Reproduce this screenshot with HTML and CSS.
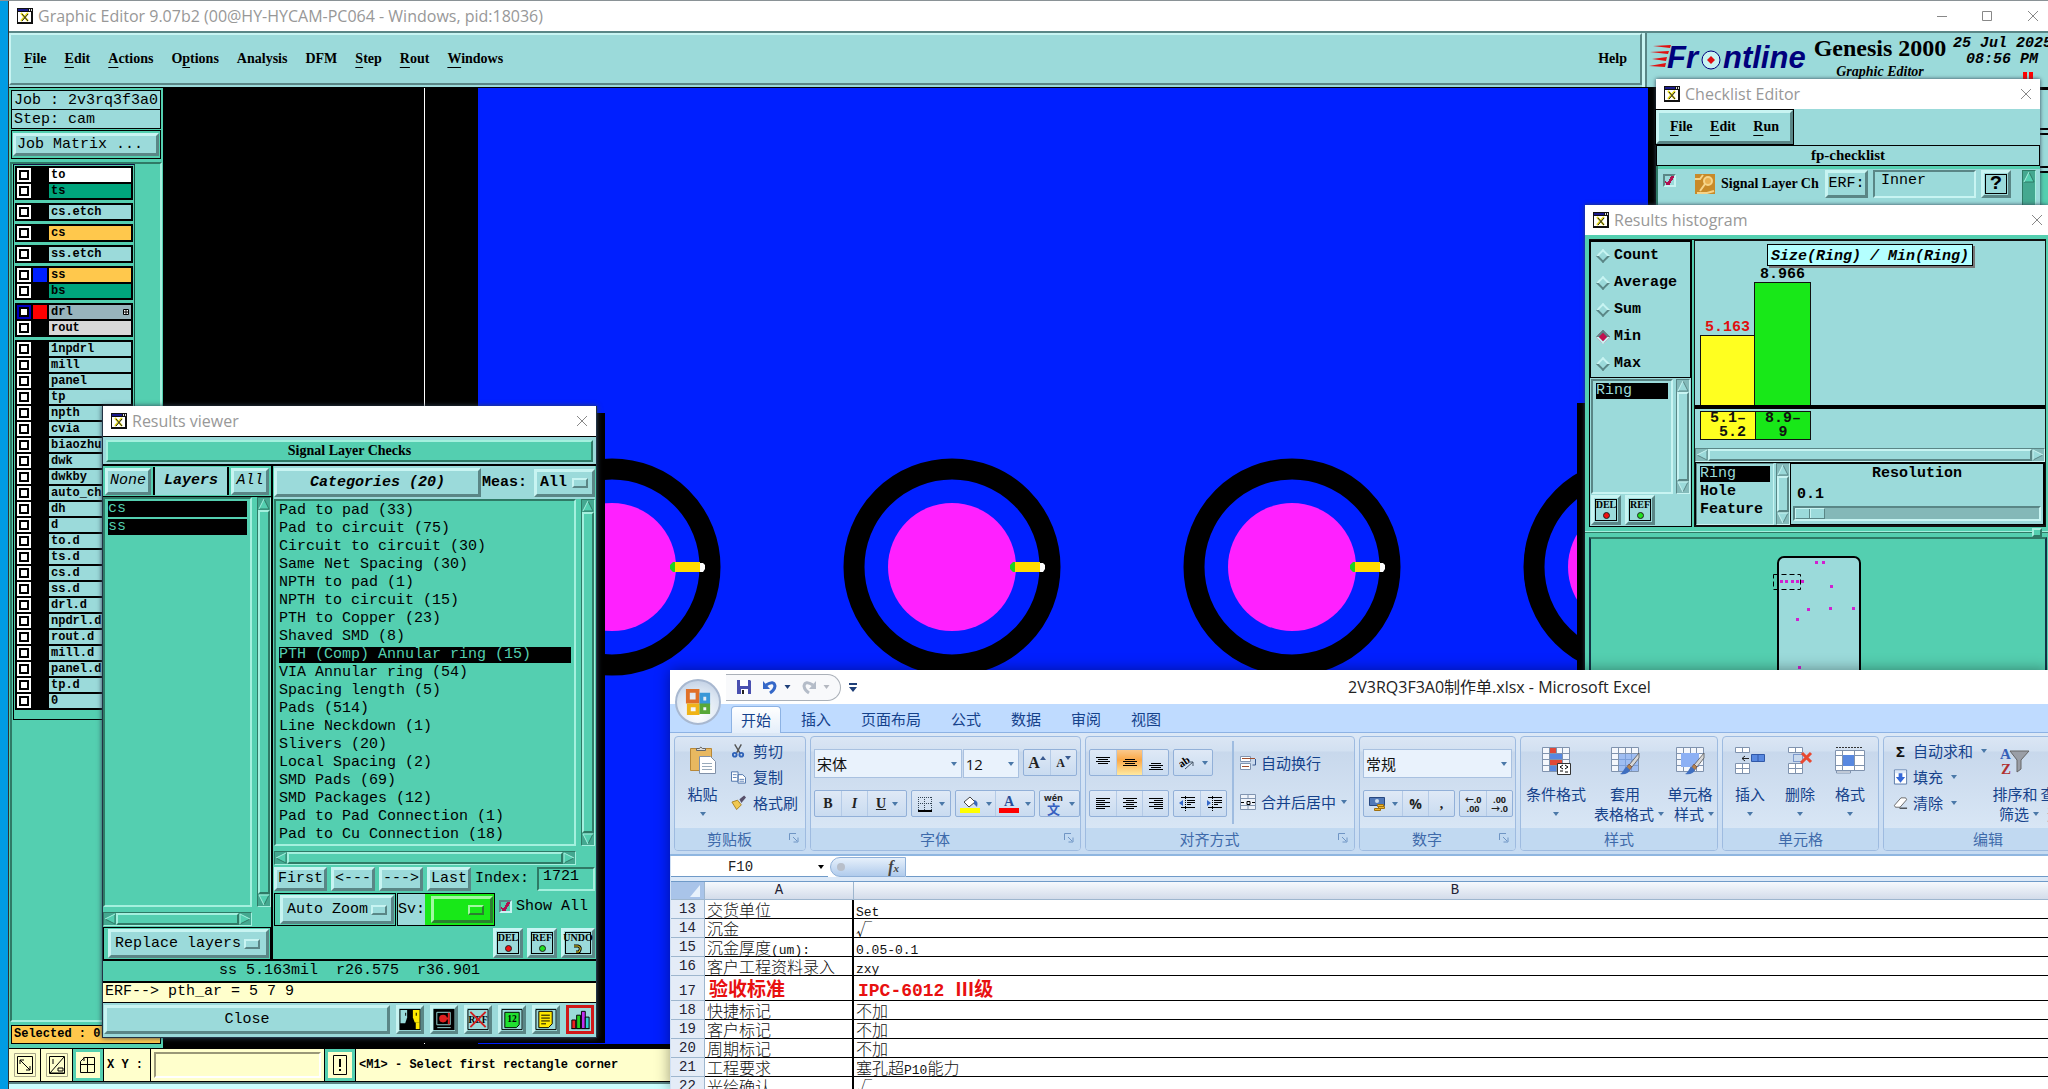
FILE: index.html
```html
<!DOCTYPE html>
<html lang="zh-CN">
<head>
<meta charset="utf-8">
<title>Graphic Editor</title>
<link rel="stylesheet" href="styles.css">
</head>
<body>
<svg class="defs" aria-hidden="true">
  <symbol id="i-app" viewBox="0 0 16 16"><path fill="#111" d="M0 0h16v16H0z"/><path fill="#fff" d="M1 4h13v10H1z"/><path fill="#1a1a8c" d="M1 1h10v2H1z"/><path fill="#ddd" d="M12 1h1v2h-1zM14 1h1v2h-1z"/><path stroke="#e6dc20" stroke-width="2" d="M4 5l7 8M11 5l-7 8"/><path stroke="#222" d="M5 6l6 7M11 6l-6 7"/></symbol>
  <symbol id="i-close" viewBox="0 0 12 12"><path stroke="#888" fill="none" d="M1 1l10 10M11 1L1 11"/></symbol>
  <symbol id="i-up" viewBox="0 0 12 12"><path class="face" d="M6 1l5 10H1z"/><path class="lo" d="M6 1l5 10H1"/><path class="hi" d="M1 11L6 1"/></symbol>
  <symbol id="i-down" viewBox="0 0 12 12"><path class="face" d="M6 11L1 1h10z"/><path class="lo" d="M6 11l5-10"/><path class="hi" d="M11 1H1l5 10"/></symbol>
  <symbol id="i-left" viewBox="0 0 12 12"><path class="face" d="M1 6l10-5v10z"/><path class="lo" d="M11 1v10L1 6"/><path class="hi" d="M1 6l10-5"/></symbol>
  <symbol id="i-right" viewBox="0 0 12 12"><path class="face" d="M11 6L1 1v10z"/><path class="lo" d="M1 11l10-5"/><path class="hi" d="M1 11V1l10 5"/></symbol>
  <symbol id="i-tri" viewBox="0 0 6 4"><path fill="#4a78a8" d="M0 0h6L3 4z"/></symbol>
  <symbol id="i-launch" viewBox="0 0 10 10"><path fill="none" stroke="#6f95c4" d="M.5 7V.5H7M4 4l4 4M9 4.500v4.500H4.500"/></symbol>
  <symbol id="i-grid" viewBox="0 0 30 30"><path fill="#f4f7fc" stroke="#8093ae" d="M1.500 2.500h27v24h-27z"/><path fill="none" stroke="#8093ae" d="M1 8.500h27M1 14.500h27M1 20.500h27M8.500 2v24M15.500 2v24M21.500 2v24"/></symbol>
  <symbol id="i-brush" viewBox="0 0 30 30"><path fill="#d8d8d8" stroke="#555" stroke-width=".8" d="M29 8L19 20l3 2 7-9z"/><path fill="#b5814a" stroke="#644" stroke-width=".6" d="M19 19l3 3-3 4-3-3z"/><path fill="#3f6fc0" d="M17 22c-3 0-3 5-7 7 5 1 9-1 10-4z"/></symbol>
</svg>

<main class="win main-win">
  <header class="title">
    <svg class="app"><use href="#i-app"/></svg><h1>Graphic Editor 9.07b2 (00@HY-HYCAM-PC064 - Windows, pid:18036)</h1>
    <svg class="winctl" viewBox="0 0 102 14"><path fill="none" stroke="#888" d="M0 7.500h10M45.500 2.500h9v9h-9zM91 2l10 10M101 2L91 12"/></svg>
  </header>
  <div class="top">
    <nav class="menubar">
      <button><u>F</u>ile</button><button><u>E</u>dit</button><button><u>A</u>ctions</button><button>O<u>p</u>tions</button><button>Analysis</button><button>DFM</button><button><u>S</u>tep</button><button><u>R</u>out</button><button><u>W</u>indows</button><button class="help">Help</button>
    </nav>
    <div class="brand">
      <svg class="logo" viewBox="0 0 162 30" role="img" aria-label="Frontline">
        <path fill="#e01010" d="M4 3l18-1-1 3zM1 9l19-1-1 3zM3 16l15-2-1 4zM0 23l17-3-1 4z"/>
        <text x="18" y="25">Fr</text><text x="74" y="25">ntline</text>
        <circle cx="62" cy="17" r="9" fill="#c8f4f2" stroke="#00007c" stroke-width="1"/><path fill="#e01010" d="M62 13l4 4-4 4-4-4z"/>
      </svg>
      <div class="product"><strong>Genesis 2000</strong><em>Graphic Editor</em></div>
      <div class="clock"><span>25 Jul 2025</span><span>08:56 PM</span><i></i></div>
    </div>
  </div>
  <div class="work">
    <aside class="side">
      <p class="info">Job : 2v3rq3f3a0</p>
      <p class="info">Step: cam</p>
      <div class="matrix"><button class="up">Job Matrix ...</button></div>
      <div class="layers">
        <div class="stack">
          <ul>
            <li><label><input type="checkbox"><i></i><span class="white">to</span></label></li>
            <li><label><input type="checkbox"><i></i><span class="green">ts</span></label></li>
          </ul>
          <ul><li><label><input type="checkbox"><i></i><span>cs.etch</span></label></li></ul>
          <ul><li><label><input type="checkbox"><i></i><span class="gold">cs</span></label></li></ul>
          <ul><li><label><input type="checkbox"><i></i><span>ss.etch</span></label></li></ul>
          <ul>
            <li><label><input type="checkbox"><i class="blue"></i><span class="gold">ss</span></label></li>
            <li><label><input type="checkbox"><i></i><span class="green">bs</span></label></li>
          </ul>
          <ul>
            <li><label><input type="checkbox" checked><i class="red"></i><span class="slate">drl<svg viewBox="0 0 6 6"><path fill="#fff" stroke="#000" d="M.5.5h5v5h-5zM3 0v6M0 3h6"/></svg></span></label></li>
            <li><label><input type="checkbox"><i></i><span class="grey">rout</span></label></li>
          </ul>
          <ul>
            <li><label><input type="checkbox"><i></i><span>1npdrl</span></label></li>
            <li><label><input type="checkbox"><i></i><span>mill</span></label></li>
            <li><label><input type="checkbox"><i></i><span>panel</span></label></li>
            <li><label><input type="checkbox"><i></i><span>tp</span></label></li>
            <li><label><input type="checkbox"><i></i><span>npth</span></label></li>
            <li><label><input type="checkbox"><i></i><span>cvia</span></label></li>
            <li><label><input type="checkbox"><i></i><span>biaozhu</span></label></li>
            <li><label><input type="checkbox"><i></i><span>dwk</span></label></li>
            <li><label><input type="checkbox"><i></i><span>dwkby</span></label></li>
            <li><label><input type="checkbox"><i></i><span>auto_chk</span></label></li>
            <li><label><input type="checkbox"><i></i><span>dh</span></label></li>
            <li><label><input type="checkbox"><i></i><span>d</span></label></li>
            <li><label><input type="checkbox"><i></i><span>to.d</span></label></li>
            <li><label><input type="checkbox"><i></i><span>ts.d</span></label></li>
            <li><label><input type="checkbox"><i></i><span>cs.d</span></label></li>
            <li><label><input type="checkbox"><i></i><span>ss.d</span></label></li>
            <li><label><input type="checkbox"><i></i><span>drl.d</span></label></li>
            <li><label><input type="checkbox"><i></i><span>npdrl.d</span></label></li>
            <li><label><input type="checkbox"><i></i><span>rout.d</span></label></li>
            <li><label><input type="checkbox"><i></i><span>mill.d</span></label></li>
            <li><label><input type="checkbox"><i></i><span>panel.d</span></label></li>
            <li><label><input type="checkbox"><i></i><span>tp.d</span></label></li>
            <li><label><input type="checkbox"><i></i><span>0</span></label></li>
          </ul>
        </div>
      </div>
      <p class="selected">Selected : 0</p>
    </aside>
    <div class="canvas">
      <svg>
        <path fill="#fff" d="M261 0h1v1200h-1z"/>
        <rect x="315" width="100%" height="100%" fill="#001fff"/>
        <defs><g id="pad"><circle r="98" fill="none" stroke="#000" stroke-width="21"/><circle r="64" fill="#ff20ff"/><path fill="#20d020" d="M64-5h-3l-3 3v4l3 3h3z"/><path fill="#ffdc00" d="M63-5h25V5H63z"/><path fill="#fff" d="M88-4h3l2 2v4l-2 3h-3z"/></g></defs>
        <use href="#pad" x="449" y="479"/><use href="#pad" x="789" y="479"/><use href="#pad" x="1129" y="479"/><use href="#pad" x="1469" y="479"/>
        <path d="M0 325h442v630H0zM1414 315h71v350h-71z"/>
      </svg>
    </div>
    <aside class="tools"><div></div><div></div><div></div><div></div></aside>
  </div>
  <footer class="cmd">
    <button aria-label="Zoom area"><svg viewBox="0 0 24 26"><path fill="none" stroke="#aaa88a" d="M1.500 1.500h21v23h-21z"/><path fill="none" stroke="#000" d="M4.500 4.500h15v17h-15zM7 8l10 10M7 12V8h4M17 14v4h-4"/></svg></button>
    <button aria-label="Measure"><svg viewBox="0 0 24 26"><path fill="none" stroke="#aaa88a" d="M1.500 1.500h21v23h-21z"/><path fill="none" stroke="#000" d="M4.500 4.500h15v17h-15zM5 21L19 5M8 7v5M5 21h14M13 16h5v3h-5z"/></svg></button>
    <button class="on" aria-label="Grid"><svg viewBox="0 0 24 26"><path fill="none" stroke="#000" d="M4.500 9.500l4-4h10v15h-14zM11.500 5v15M4 12.500h14M8 5v4"/></svg></button>
    <label for="xy">X Y :</label><span class="field"><input id="xy"></span>
    <button class="on" aria-label="Alert"><svg viewBox="0 0 24 26"><path fill="none" stroke="#000" d="M5.500 3.500h13v19h-13z"/><path d="M11 7h2v8h-2zM11 17h2v2h-2z"/></svg></button>
    <output>&lt;M1&gt; - Select first rectangle corner</output>
  </footer>
</main>

<section class="win check-win">
  <header class="title"><svg class="app"><use href="#i-app"/></svg><h2>Checklist Editor</h2><button class="x" aria-label="Close"><svg><use href="#i-close"/></svg></button></header>
  <nav class="up menu2"><button><u>F</u>ile</button><button><u>E</u>dit</button><button><u>R</u>un</button></nav>
  <p class="listname">fp-checklist</p>
  <div class="checkrow">
    <input class="tick" type="checkbox" checked aria-label="Signal Layer Ch">
    <svg class="chip" viewBox="0 0 20 20"><path fill="#c88a28" d="M0 0h20v20H0z"/><circle cx="13" cy="7" r="4" fill="#e8b050" stroke="#f6d488" stroke-width="2"/><path fill="none" stroke="#f6d488" stroke-width="2" d="M10 10l-5 7M0 5h5l3-4M2 19h10l7-2"/></svg>
    <b>Signal Layer Ch</b><button class="up erf">ERF:</button><input class="down" value="Inner" aria-label="ERF"><button class="up q">?</button>
    <div class="sbv teal"><svg><use href="#i-up"/></svg></div>
  </div>
</section>

<section class="win hist-win">
  <header class="title"><svg class="app"><use href="#i-app"/></svg><h2>Results histogram</h2><button class="x" aria-label="Close"><svg><use href="#i-close"/></svg></button></header>
  <div class="hist">
    <div class="hleft">
      <fieldset>
        <label><input type="radio" name="stat">Count</label><label><input type="radio" name="stat">Average</label><label><input type="radio" name="stat">Sum</label><label><input type="radio" name="stat" checked>Min</label><label><input type="radio" name="stat">Max</label>
      </fieldset>
      <div class="hlist"><ul class="down"><li class="sel">Ring</li></ul><div class="sbv"><svg><use href="#i-up"/></svg><i></i><svg><use href="#i-down"/></svg></div></div>
      <div class="tags"><button class="up tag">DEL<i class="r"></i></button><button class="up tag">REF<i class="g"></i></button></div>
    </div>
    <div class="hright">
      <div class="plot">
        <h3>Size(Ring) / Min(Ring)</h3>
        <div class="bars"><div class="bar low"><span>5.163</span><i style="height:70px"></i></div><div class="bar high"><span>8.966</span><i style="height:123px"></i></div></div>
        <div class="bins"><span class="low">5.1–<br>&nbsp;5.2</span><span class="high">8.9–<br>9</span></div>
      </div>
      <div class="sbh"><svg><use href="#i-left"/></svg><i></i><svg><use href="#i-right"/></svg></div>
      <div class="res">
        <ul class="down"><li class="sel">Ring</li><li>Hole</li><li>Feature</li></ul>
        <div class="sbv"><svg><use href="#i-up"/></svg><i></i><svg><use href="#i-down"/></svg></div>
        <div class="resbox"><label for="rs">Resolution</label><span>0.1</span><input id="rs" type="range" value="0"></div>
      </div>
    </div>
  </div>
  <div class="sash"><i></i></div>
  <div class="map">
    <svg viewBox="0 0 96 130"><rect x="9" y="5" width="82" height="140" rx="6" fill="#9bdada" stroke="#000" stroke-width="2"/>
      <path fill="#d020d0" d="M46 9h3v3h-3zM53 9h3v3h-3zM11 28h3v3h-3zM16 28h3v3h-3zM22 28h3v3h-3zM27 28h3v3h-3zM32 28h3v3h-3zM61 33h3v3h-3zM38 56h3v3h-3zM60 55h3v3h-3zM83 55h3v3h-3zM27 66h3v3h-3zM29 114h3v3h-3z"/>
      <path fill="none" stroke="#000" stroke-dasharray="5 3" d="M4.500 22.500h27v15h-27z"/></svg>
  </div>
</section>

<section class="win view-win">
  <header class="title"><svg class="app"><use href="#i-app"/></svg><h2>Results viewer</h2><button class="x" aria-label="Close"><svg><use href="#i-close"/></svg></button></header>
  <p class="check"><span>Signal Layer Checks</span></p>
  <div class="cols">
    <div class="vleft">
      <div class="heads"><button class="up">None</button><b>Layers</b><button class="up">All</button></div>
      <div class="listrow"><ul class="down gr"><li class="sel">cs</li><li class="sel">ss</li></ul><div class="sbv teal"><svg><use href="#i-up"/></svg><i></i><svg><use href="#i-down"/></svg></div></div>
      <div class="sbh teal"><svg><use href="#i-left"/></svg><i></i><svg><use href="#i-right"/></svg></div>
      <div class="opt"><span class="up knob"><select aria-label="Layer mode"><option>Replace layers</option></select></span></div>
    </div>
    <div class="vright">
      <div class="cats"><button class="up">Categories (20)</button><label for="meas">Meas:</label><span class="up knob"><select id="meas"><option>All</option></select></span></div>
      <div class="listrow"><ul class="down gr">
        <li>Pad to pad (33)</li><li>Pad to circuit (75)</li><li>Circuit to circuit (30)</li><li>Same Net Spacing (30)</li><li>NPTH to pad (1)</li><li>NPTH to circuit (15)</li><li>PTH to Copper (23)</li><li>Shaved SMD (8)</li><li class="sel">PTH (Comp) Annular ring (15)</li><li>VIA Annular ring (54)</li><li>Spacing length (5)</li><li>Pads (514)</li><li>Line Neckdown (1)</li><li>Slivers (20)</li><li>Local Spacing (2)</li><li>SMD Pads (69)</li><li>SMD Packages (12)</li><li>Pad to Pad Connection (1)</li><li>Pad to Cu Connection (18)</li>
      </ul><div class="sbv teal"><svg><use href="#i-up"/></svg><i></i><svg><use href="#i-down"/></svg></div></div>
      <div class="sbh teal"><svg><use href="#i-left"/></svg><i></i><svg><use href="#i-right"/></svg></div>
      <div class="step"><button class="up">First</button><button class="up">&lt;---</button><button class="up">---&gt;</button><button class="up">Last</button><label for="idx">Index:</label><input id="idx" class="down gr" value="1721"></div>
      <div class="zoomrow"><span class="boxed auto"><span class="up knob"><select aria-label="Zoom mode"><option>Auto Zoom</option></select></span></span><span class="boxed sv"><label for="sv">Sv:</label><span class="lime"><span class="up knob"><select id="sv"><option></option></select></span></span></span><label class="show"><input class="tick" type="checkbox" checked>Show All</label></div>
      <div class="tags"><button class="up tag">DEL<i class="r"></i></button><button class="up tag">REF<i class="g"></i></button><button class="up tag">UNDO<svg viewBox="0 0 10 11"><path fill="none" stroke="#000" stroke-width="3" d="M1 3h4q4 1 1 6h-3"/><path fill="none" stroke="#f0e030" d="M1 3h4q4 1 1 6h-3"/></svg></button></div>
    </div>
  </div>
  <p class="meas">ss 5.163mil&nbsp; r26.575&nbsp; r36.901</p>
  <p class="erfline">ERF--&gt; pth_ar = 5 7 9</p>
  <div class="acts">
    <button class="up close">Close</button>
    <button class="up" aria-label="Zoom"><svg viewBox="0 0 22 24"><path d="M0 1h22v22H0z"/><path fill="#9bdada" d="M1 2h7v8l-2 6H1z"/><path fill="#ffe800" d="M14 2h7v13h-5l-2-5z"/><path fill="#ffe800" d="M17 15h4v7h-4z"/><path d="M6 5v3h1V5zM17 5v3h1V5z"/></svg></button>
    <button class="up" aria-label="Snapshot"><svg viewBox="0 0 22 24"><path d="M0 1h22v22H0z"/><path fill="#000" stroke="#9bdada" d="M3.500 4.500h14v13h-14z"/><circle cx="10" cy="11" r="4" fill="#e02020"/><path fill="#e02020" d="M15 5h2v12h-2zM10 10h6v2h-6z"/><path stroke="#9bdada" d="M4 20.500h14"/></svg></button>
    <button class="up" aria-label="No reference"><svg viewBox="0 0 22 24"><path fill="none" stroke="#000" d="M.5 1.500h21v21H.5z"/><text x="1" y="16">REF</text><path stroke="#d02020" stroke-width="2" d="M3 4l16 16M19 4L3 20"/></svg></button>
    <button class="up" aria-label="Renumber"><svg viewBox="0 0 22 24"><path fill="none" stroke="#000" d="M.5 1.500h21v21H.5z"/><path fill="#20e030" stroke="#000" d="M3.500 4.500h15v13l-3 3h-12z"/><text x="6" y="15">12</text></svg></button>
    <button class="up" aria-label="Report"><svg viewBox="0 0 22 24"><path fill="none" stroke="#000" d="M.5 1.500h21v21H.5z"/><path fill="#ffe800" stroke="#000" d="M3.500 3.500h14v13l-4 4h-10z"/><path stroke="#000" d="M6 7.500h9M6 10.500h9M6 13.500h9M6 16.500h5"/></svg></button>
    <button class="up hot" aria-label="Histogram"><svg viewBox="0 0 22 24"><path fill="none" stroke="#000" d="M2 21.500h19"/><path fill="#f02020" stroke="#000" d="M2.500 12.500h4v9h-4z"/><path fill="#20d020" stroke="#000" d="M7.500 7.500h4v14h-4z"/><path fill="#c030f0" stroke="#000" d="M12.500 3.500h4v18h-4z"/><path fill="#30d0d0" stroke="#000" d="M16.500 9.500h4v12h-4z"/></svg></button>
  </div>
</section>

<section class="win xl">
  <header class="xtitle">
    <div class="qat">
      <svg viewBox="0 0 16 16"><path fill="#4a50b0" d="M1 1h13l1 1v13H1z"/><path fill="#fff" d="M4 1h8v6H4zM5 10h7v5H5z"/><path fill="#222" d="M6 11h2v4H6z"/></svg>
      <svg viewBox="0 0 16 16"><path fill="none" stroke="#3568c8" stroke-width="3" d="M4 6q8-5 9 1-.5 4-5 7"/><path fill="#3568c8" d="M1 2v8h7z"/></svg>
      <svg class="a" viewBox="0 0 6 4"><path fill="#1e3f78" d="M0 0h6L3 4z"/></svg>
      <svg viewBox="0 0 16 16"><path fill="none" stroke="#b4bcc8" stroke-width="3" d="M12 6Q4 1 3 7q.5 4 5 7"/><path fill="#b4bcc8" d="M15 2v8H8z"/></svg>
      <svg class="a" viewBox="0 0 6 4"><path fill="#b4b8c0" d="M0 0h6L3 4z"/></svg>
    </div>
    <svg class="more" viewBox="0 0 8 9"><path fill="#1e3f78" d="M0 0h8v2H0zM0 4h8L4 9z"/></svg>
    <h2>2V3RQ3F3A0制作单.xlsx - Microsoft Excel</h2>
  </header>
  <button class="orb" aria-label="Office"><svg viewBox="0 0 30 30"><g fill="none" stroke-width="4"><path stroke="#e07028" d="M4 3h10v11H4z"/><path stroke="#3a98d8" d="M18 7h7v8h-7z"/><path stroke="#f0b418" d="M5 18h9v8H5z"/><path stroke="#58a838" d="M18 18h7v7h-7z"/></g></svg></button>
  <nav class="tabs"><button class="on">开始</button><button>插入</button><button>页面布局</button><button>公式</button><button>数据</button><button>审阅</button><button>视图</button></nav>
  <div class="ribbon">
    <div class="grp clip"><div class="body">
      <button class="big"><svg viewBox="0 0 30 30"><path fill="#e8b860" stroke="#b88838" d="M2.500 3.500h21v22h-21z"/><path fill="#ddd" stroke="#666" d="M8.500 5.500v-2h3q1-3 3 0h3v2z"/><path fill="#fff" stroke="#8090a8" d="M11.500 11.500h11l5 5v12h-16z"/><path stroke="#9ab" d="M14 18.500h10M14 21.500h10M14 24.500h10"/></svg>粘贴<svg class="a"><use href="#i-tri"/></svg></button>
      <div class="col"><button><svg viewBox="0 0 16 16"><path stroke="#555" stroke-width="1.500" d="M4 1l6 10M11 1L6 10"/><g fill="none" stroke="#2f62b8" stroke-width="2"><circle cx="4" cy="12" r="2"/><circle cx="11" cy="12" r="2"/></g></svg>剪切</button>
      <button><svg viewBox="0 0 16 16"><path fill="#fff" stroke="#4a70a8" d="M.5 2.500h7v10h-7zM7.500 5.500h5l3 3v6h-8z"/><path stroke="#5a80b8" d="M2 5.500h4M2 8.500h4M9 10.500h5M9 12.500h5"/></svg>复制</button>
      <button><svg viewBox="0 0 16 16"><path fill="#f0c850" stroke="#a88020" d="M1 7l6-2 4 5-5 5z"/><path fill="#58506a" d="M9 4l5-4 2 2-5 6z"/></svg>格式刷</button></div>
    </div><footer class="la">剪贴板<svg class="l"><use href="#i-launch"/></svg></footer></div>

    <div class="grp font"><div class="body rows">
      <div class="r"><span class="cb w150"><select aria-label="字体"><option>宋体</option></select><svg class="a"><use href="#i-tri"/></svg></span><span class="cb w56"><select aria-label="字号"><option>12</option></select><svg class="a"><use href="#i-tri"/></svg></span><span class="bs first"><button class="s18">A<svg class="m" viewBox="0 0 6 4"><path fill="#3a5a90" d="M0 4h6L3 0z"/></svg></button><button class="s14">A<svg class="m" viewBox="0 0 6 4"><path fill="#3a5a90" d="M0 0h6L3 4z"/></svg></button></span></div>
      <div class="r"><span class="bs"><button>B</button><button class="it">I</button><button class="wd"><u>U</u><svg class="a"><use href="#i-tri"/></svg></button></span>
      <span class="bs"><button class="wd"><svg viewBox="0 0 16 16"><path fill="none" stroke="#345" stroke-dasharray="1 1" d="M1.500 1v13M7.500 1v13M14.500 1v13M1 1.500h14M1 7.500h14"/><path stroke="#000" stroke-width="2" d="M1 15h14"/></svg><svg class="a"><use href="#i-tri"/></svg></button></span>
      <span class="bs"><button class="wd"><svg class="t" viewBox="0 0 20 18"><path fill="#fff" stroke="#444" d="M4 7l6-5 5 5-6 5z"/><path fill="#3a68b8" d="M14 5q5 1 3 7l-3-3z"/><path fill="#ff0" d="M0 13h20v5H0z"/></svg><svg class="a"><use href="#i-tri"/></svg></button><button class="wd"><svg class="t" viewBox="0 0 20 18"><text x="5" y="11" fill="#2a4f98">A</text><path fill="red" d="M0 13h20v5H0z"/></svg><svg class="a"><use href="#i-tri"/></svg></button></span>
      <span class="bs"><button class="wd"><span class="wen"><small>wén</small>文</span><svg class="a"><use href="#i-tri"/></svg></button></span></div>
    </div><footer class="la">字体<svg class="l"><use href="#i-launch"/></svg></footer></div>

    <div class="grp align"><div class="body split">
      <div class="rows">
      <div class="r"><span class="bs"><button><svg viewBox="0 0 16 16"><path stroke="#000" d="M1 2.500h14M3 4.500h10M1 6.500h14M3 8.500h10"/></svg></button><button class="hl"><svg viewBox="0 0 16 16"><path stroke="#000" d="M3 4.500h10M1 6.500h14M3 8.500h10M1 10.500h14"/></svg></button><button><svg viewBox="0 0 16 16"><path stroke="#000" d="M3 8.500h10M1 10.500h14M3 12.500h10M1 14.500h14"/></svg></button></span>
      <span class="bs"><button class="wd"><svg viewBox="0 0 16 16"><text class="ab" x="0" y="10" transform="rotate(-35 6 8)">ab</text><path stroke="#456" fill="none" d="M6 14l8-7M14 11V7h-4"/></svg><svg class="a"><use href="#i-tri"/></svg></button></span></div>
      <div class="r"><span class="bs"><button><svg viewBox="0 0 16 16"><path stroke="#000" d="M1 2.500h14M1 4.500h9M1 6.500h14M1 8.500h9M1 10.500h14M1 12.500h9"/></svg></button><button><svg viewBox="0 0 16 16"><path stroke="#000" d="M1 2.500h14M4 4.500h8M1 6.500h14M4 8.500h8M1 10.500h14M4 12.500h8"/></svg></button><button><svg viewBox="0 0 16 16"><path stroke="#000" d="M1 2.500h14M6 4.500h9M1 6.500h14M6 8.500h9M1 10.500h14M6 12.500h9"/></svg></button></span>
      <span class="bs"><button><svg viewBox="0 0 16 16"><path stroke="#000" d="M2 1.500h14M8 4.500h8M8 6.500h8M8 8.500h4M2 11.500h14"/><path stroke="#000" stroke-dasharray="1 1" d="M6.500 0v15"/><path fill="#3568c8" d="M0 7l4-3v6z"/></svg></button><button><svg viewBox="0 0 16 16"><path stroke="#000" d="M2 1.500h14M8 4.500h8M8 6.500h8M8 8.500h4M2 11.500h14"/><path stroke="#000" stroke-dasharray="1 1" d="M6.500 0v15"/><path fill="#3568c8" d="M5 7L1 4v6z"/></svg></button></span></div>
      </div>
      <div class="wrap"><button><svg viewBox="0 0 16 16"><path fill="#fff" stroke="#8094b0" d="M.5 1.500h10v5H.5zM.5 8.500h10v6H.5z"/><path stroke="#a05030" d="M2 3.500h13M2 11.500h7"/><path fill="none" stroke="#3a5a90" d="M15.500 4v6h-3"/></svg>自动换行</button>
      <button><svg viewBox="0 0 16 16"><path fill="#eef3fa" stroke="#8094b0" d="M.5.5h15v15H.5zM.5 4.500h15M.5 11.500h15M8 0v4M8 12v4"/><path stroke="#000" d="M1 8.500h3M12 8.500h3M7 7.500h3v3H7z" fill="none"/></svg>合并后居中<svg class="a"><use href="#i-tri"/></svg></button></div>
    </div><footer class="la">对齐方式<svg class="l"><use href="#i-launch"/></svg></footer></div>

    <div class="grp num"><div class="body rows">
      <div class="r"><span class="cb w149"><select aria-label="数字格式"><option>常规</option></select><svg class="a"><use href="#i-tri"/></svg></span></div>
      <div class="r"><span class="bs"><button class="wd"><svg viewBox="0 0 16 16"><path fill="#5078b8" stroke="#284880" d="M.5 1.500h15v8H.5z"/><circle cx="8" cy="5" r="2" fill="#cde"/><path fill="#f0b830" stroke="#a07010" d="M8.500 8.500h6v2h-6zM9.500 10.500h6v2h-6zM5.500 12.500h6v2h-6z"/></svg><svg class="a"><use href="#i-tri"/></svg></button><button class="pc">%</button><button>,</button></span><span class="bs dec"><button><span>←.0</span>.00</button><button><span>.00</span>→.0</button></span></div>
    </div><footer class="la">数字<svg class="l"><use href="#i-launch"/></svg></footer></div>

    <div class="grp styles"><div class="body">
      <button class="big"><svg viewBox="0 0 30 30"><use href="#i-grid"/><path fill="#e04838" d="M9 3h6v5H9zM9 15h12v5H9z"/><path fill="#5888e0" d="M9 9h12v5H9zM9 21h6v5H9z"/><path fill="#fff" stroke="#333" d="M16.500 18.500h13v11h-13z"/><path fill="none" stroke="#000" d="M22 20l-3 2 3 2M19 26h3M24 20l3 2-3 2M24 27h3"/></svg>条件格式<svg class="a"><use href="#i-tri"/></svg></button>
      <button class="big"><svg viewBox="0 0 30 30"><use href="#i-grid"/><path fill="#7aa4ec" opacity=".7" d="M9 9h19v17H9z"/><use href="#i-brush"/></svg>套用<span>表格格式<svg class="a"><use href="#i-tri"/></svg></span></button>
      <button class="big"><svg viewBox="0 0 30 30"><use href="#i-grid"/><path fill="#8cb0f4" d="M6 8h18v14H6z"/><use href="#i-brush"/></svg>单元格<span>样式<svg class="a"><use href="#i-tri"/></svg></span></button>
    </div><footer>样式</footer></div>

    <div class="grp cells"><div class="body">
      <button class="big"><svg viewBox="0 0 30 30"><path fill="#fff" stroke="#8093ae" d="M.5 2.500h14v5H.5zM.5 18.500h14v10H.5zM7.500 2v5M7.500 18v10M0 23.500h14"/><path fill="#5888e0" stroke="#3058a8" d="M16.500 9.500h13v7h-13zM23 9v7"/><path stroke="#222" fill="none" d="M7 13.500h7M10 11l-3 2.500 3 2.500"/></svg>插入<svg class="a"><use href="#i-tri"/></svg></button>
      <button class="big"><svg viewBox="0 0 30 30"><path fill="#fff" stroke="#8093ae" d="M3.500 2.500h14v5h-14zM3.500 18.500h14v10h-14zM10.500 2v5M10.500 18v10M3 23.500h14"/><path fill="none" stroke="#3058a8" stroke-dasharray="1 1" d="M8.500 9.500h9v7h-9z"/><path stroke="#e84830" stroke-width="3" d="M17 8l9 9M26 8l-10 10"/></svg>删除<svg class="a"><use href="#i-tri"/></svg></button>
      <button class="big"><svg viewBox="0 0 30 30"><path stroke="#333" stroke-dasharray="2 1" d="M1 2.500h26"/><path fill="#fff" stroke="#8093ae" d="M.5 5.500h29v20H.5zM0 10.500h29M0 20.500h29M7.500 6v20M19.500 6v20M1.500 26h14v2h-14z"/><path fill="#5888e0" d="M8 10h11v11H8z"/></svg>格式<svg class="a"><use href="#i-tri"/></svg></button>
    </div><footer>单元格</footer></div>

    <div class="grp edit"><div class="body">
      <div class="col"><button><b class="sum">Σ</b>自动求和<svg class="a"><use href="#i-tri"/></svg></button>
      <button><svg viewBox="0 0 16 16"><path fill="#fff" stroke="#5878a8" d="M1.500.5h13v15h-13z"/><path fill="#dce8f8" d="M2 1h12v3H2z"/><path fill="#3568d8" d="M6 4h4v4h3l-5 6-5-6h3z"/></svg>填充<svg class="a"><use href="#i-tri"/></svg></button>
      <button><svg viewBox="0 0 16 16"><path fill="#fff" stroke="#666" d="M1.500 10.500l7-8h5l1 2-7 8h-5z"/><path stroke="#000" d="M7 13.500h8"/></svg>清除<svg class="a"><use href="#i-tri"/></svg></button></div>
      <button class="big"><svg viewBox="0 0 30 30"><text x="0" y="14" fill="#3560b8">A</text><text x="1" y="29" fill="#b03030">Z</text><path fill="#9a9ea6" stroke="#666" d="M10 6h19l-8 9v9l-4 3V15z"/></svg>排序和<span>筛选<svg class="a"><use href="#i-tri"/></svg></span></button>
      <button class="big"><svg viewBox="0 0 30 30"></svg>查找和<span>选择<svg class="a"><use href="#i-tri"/></svg></span></button>
    </div><footer>编辑</footer></div>
  </div>
  <div class="fbar"><label class="name"><input value="F10" aria-label="名称框"><svg class="a"><use href="#i-tri"/></svg></label><span class="fx"><i></i><em>f<small>x</small></em></span><input class="formula" aria-label="编辑栏"></div>
  <table>
    <colgroup><col class="c0"><col class="c1"><col></colgroup>
    <thead><tr><th><svg viewBox="0 0 10 12"><path fill="#e8f2fc" d="M10 0v12H0z"/></svg></th><th>A</th><th>B</th></tr></thead>
    <tbody>
      <tr><th>13</th><td>交货单位</td><td><span>Set</span></td></tr>
      <tr><th>14</th><td>沉金</td><td>√</td></tr>
      <tr><th>15</th><td>沉金厚度<span>(um):</span></td><td><span>0.05-0.1</span></td></tr>
      <tr><th>16</th><td>客户工程资料录入</td><td><span>zxy</span></td></tr>
      <tr class="key"><th>17</th><td>验收标准</td><td><span>IPC-6012 </span>Ⅲ级</td></tr>
      <tr><th>18</th><td>快捷标记</td><td>不加</td></tr>
      <tr><th>19</th><td>客户标记</td><td>不加</td></tr>
      <tr><th>20</th><td>周期标记</td><td>不加</td></tr>
      <tr><th>21</th><td>工程要求</td><td>塞孔超<span>P10</span>能力</td></tr>
      <tr><th>22</th><td>光绘确认</td><td>√</td></tr>
    </tbody>
  </table>
</section>
</body>
</html>
```

FILE: styles.css
```css
:root {
  --cyan: #9bdada; --cyan-hi: #c8f4f2; --cyan-lo: #5a8686;
  --green: #54cfb0; --green-hi: #a4f0de; --green-lo: #2f7a66;
  --cream: #ffffcc;
  --mono: "Liberation Mono", "Courier New", monospace;
  --serif: "Liberation Serif", "Times New Roman", serif;
  --ui: "Open Sans", "Noto Sans CJK SC", sans-serif;
}
* { box-sizing: border-box; }
body { margin: 0; height: 100vh; overflow: hidden; background: #009ce4; font: 15px/18px var(--mono); color: #000; border-top: 1px solid #8a9296; }
button, input, select { font: inherit; color: inherit; margin: 0; padding: 0; border: 0; border-radius: 0; background: none; min-width: 0; }
select { appearance: none; width: 100%; }
ul, p, h1, h2, h3, fieldset { margin: 0; padding: 0; list-style: none; border: 0; min-width: 0; }
svg { display: block; flex: none; }
.defs { position: absolute; width: 0; height: 0; }
.win { position: absolute; display: flex; flex-direction: column; background: var(--cyan); }
.title { display: flex; align-items: center; height: 30px; flex: none; padding: 0 8px; gap: 5px; background: #fff; color: #989898; }
.title h1, .title h2 { flex: 1; font: 16px/28px var(--ui); }
.app { width: 16px; height: 16px; }
.x svg { width: 12px; height: 12px; }
.up { border: 3px solid; border-color: var(--cyan-hi) var(--cyan-lo) var(--cyan-lo) var(--cyan-hi); background: var(--cyan); }
.down { border: 2px solid; border-color: var(--cyan-lo) var(--cyan-hi) var(--cyan-hi) var(--cyan-lo); background: var(--cyan); }
.down.gr { border-color: var(--green-lo) var(--green-hi) var(--green-hi) var(--green-lo); background: var(--green); }

/* Main window */
.main-win { left: 8px; right: 0; top: 1px; bottom: 0; border-left: 1px solid #333; }
.winctl { width: 102px; height: 14px; margin-right: 1px; }
.top { display: flex; flex: none; height: 57px; border-top: 2px solid var(--cyan-lo); border-bottom: 1px solid #000; }
.menubar { flex: 1; display: flex; align-items: center; gap: 18px; padding: 0 13px; margin-bottom: 2px; border: 2px solid; border-color: var(--cyan-hi) var(--cyan-lo) var(--cyan-lo) var(--cyan-hi); font: bold 14px/18px var(--serif); }
.menubar u, .menu2 u { text-underline-offset: 4px; }
.help { margin-left: auto; }
.brand { width: 406px; display: flex; border-left: 3px solid var(--cyan-hi); box-shadow: inset 2px 0 var(--cyan-lo); padding-left: 4px; overflow: hidden; }
.logo { width: 162px; height: 30px; margin-top: 10px; font: italic bold 31px "Liberation Sans", sans-serif; fill: #00007c; flex: none; }
.product { display: flex; flex-direction: column; align-items: center; width: 138px; flex: none; padding-top: 2px; }
.product strong { font: bold 24px/26px var(--serif); white-space: nowrap; }
.product em { font: italic bold 14px/22px var(--serif); }
.clock { display: flex; flex-direction: column; padding: 3px 0 0 4px; font: italic bold 15px/16px var(--mono); white-space: nowrap; }
.clock span + span { padding-left: 13px; }
.clock i { width: 10px; height: 8px; margin: 4px 0 0 70px; border: solid red; border-width: 0 4px; }
.work { flex: 1; min-height: 0; display: flex; }
.side { width: 154px; flex: none; display: flex; flex-direction: column; padding: 2px 2px 4px; background: var(--green); }
.info { height: 20px; margin-bottom: -1px; padding-left: 2px; border: 1px solid #000; background: var(--cyan); white-space: nowrap; line-height: 19px; }
.matrix { border: 1px solid #000; margin-top: 2px; padding: 2px 1px; }
.matrix button { display: block; width: 100%; text-align: left; padding-left: 1px; line-height: 17px; }
.layers { margin: 3px -1px 3px; flex: 1; border: 2px solid; border-color: var(--green-lo) var(--green-hi) var(--green-hi) var(--green-lo); }
.stack { width: 122px; margin-left: 1px; padding: 1px 1px 9px 1px; border: 1px solid #000; border-top-color: #114; border-right-color: #1a4a3c; }
.stack ul { background: #000; padding: 0 2px 2px; margin-bottom: 3px; }
.stack ul:last-child { margin: 0; }
.stack label { display: flex; gap: 2px; padding-top: 2px; font: bold 12px/14px var(--mono); }
.stack input { appearance: none; width: 14px; height: 14px; border: 2px solid #fff; background: #fff; box-shadow: inset 0 0 0 2px #000; }
.stack input:checked { border-color: #0000c0; }
.stack i { width: 14px; height: 14px; }
.stack span { flex: 1; padding-left: 2px; background: var(--cyan); display: flex; justify-content: space-between; align-items: center; }
.stack span svg { width: 6px; height: 6px; margin-right: 2px; }
.stack .white { background: #fff; } .stack .green { background: #00a47c; } .stack .gold { background: #ffc84c; } .stack .slate { background: #98b4bc; } .stack .grey { background: #d8d8d8; }
.stack .blue { background: #001fff; } .stack .red { background: red; }
.selected { height: 19px; border: 1px solid #000; background: #ffc84c; padding-left: 2px; font: bold 12px/17px var(--mono); }
.canvas { flex: 1; min-width: 0; background: #000; padding: 0 8px 4px 0; }
.canvas > svg { width: 100%; height: 100%; }
.tools { width: 392px; flex: none; display: flex; flex-direction: column; gap: 3px; }
.tools div { height: 35px; border: 2px solid #000; border-left: 0; border-right: 0; }
.tools div:first-child { height: 42px; }
.tools div:nth-child(3) { background: var(--green); height: 70px; }
.cmd { flex: none; display: flex; height: 41px; padding: 1px 0 8px; background: #000; gap: 1px; box-shadow: inset 0 -5px #ccffff, inset 0 -7px var(--cyan-lo); }
.cmd > * { background: var(--cream); display: flex; align-items: center; font: bold 12px/14px var(--mono); }
.cmd button { width: 31px; justify-content: center; }
.cmd svg { width: 24px; height: 26px; }
.cmd .on { width: 30px; border: 3px solid var(--green); }
.cmd label { width: 46px; padding-left: 3px; }
.cmd .field { width: 173px; padding: 3px; }
.cmd .field input { width: 100%; height: 100%; border: 2px solid; border-color: #9a9878 #fff #fff #9a9878; padding-left: 3px; }
.cmd output { flex: 1; padding-left: 3px; white-space: nowrap; }

/* Motif scroll bars */
.sbv, .sbh { display: flex; flex: none; background: #84baba; border: 1px solid; border-color: var(--cyan-lo) var(--cyan-hi) var(--cyan-hi) var(--cyan-lo); --f: var(--cyan); --h: var(--cyan-hi); --l: var(--cyan-lo); }
.sbv { flex-direction: column; width: 14px; }
.sbh { height: 14px; }
.teal { background: #44a890; --f: var(--green); --h: var(--green-hi); --l: var(--green-lo); border-color: var(--l) var(--h) var(--h) var(--l); }
.sbv svg, .sbh svg { width: 12px; height: 12px; }
.sbv i, .sbh i { flex: 1; background: var(--f); border: 2px solid; border-color: var(--h) var(--l) var(--l) var(--h); }
.face { fill: var(--f); } .lo { fill: none; stroke: var(--l); } .hi { fill: none; stroke: var(--h); }
.sel { background: #000; color: var(--cyan); }
.gr .sel { color: var(--green); }

/* Checklist editor */
.check-win { right: 8px; width: 384px; top: 79px; height: 200px; box-shadow: 0 0 4px #345; }
.title + .menu2 { margin-top: 1px; }
.menu2 { width: 137px; height: 34px; padding: 0 11px; display: flex; align-items: center; justify-content: space-between; font: bold 14px/18px var(--serif); outline: 1px solid #000; }
.listname { height: 21px; margin-top: 1px; border: 1px solid #000; text-align: center; font: bold 15px/19px var(--serif); }
.checkrow { display: flex; align-items: flex-start; padding: 4px 4px 0 5px; border-left: 2px solid var(--green-lo); box-shadow: inset 0 3px var(--green); height: 60px; }
.tick { appearance: none; width: 13px; height: 13px; flex: none; border: 2px solid; border-color: var(--cyan-lo) var(--cyan-hi) var(--cyan-hi) var(--cyan-lo); background: linear-gradient(60deg, transparent 22%, #b01050 22% 36%, transparent 36%) 0 100% / 5px 6px no-repeat, linear-gradient(120deg, transparent 44%, #b01050 44% 68%, transparent 68%); }
.tick + .chip { margin-left: 19px; }
.checkrow .tick, .chip { margin-top: 4px; }
.chip { width: 20px; height: 20px; }
.checkrow b { width: 110px; flex: none; padding: 5px 0 0 6px; font: bold 14px/18px var(--serif); white-space: nowrap; }
.erf { flex: none; width: 43px; height: 28px; }
.checkrow .down { width: 103px; height: 28px; margin: 0 5px; padding: 0 0 8px 6px; flex: none; }
.q { width: 30px; height: 28px; font: bold 20px/18px var(--mono); outline: 1px solid #000; outline-offset: -5px; flex: none; }
.checkrow .sbv { height: 50px; margin-left: auto; }

/* Results histogram */
.hist-win { right: 0; width: 463px; top: 205px; height: 500px; background: var(--green); box-shadow: 0 0 4px #345; }
.hist-win .title { padding-right: 5px; }
.hist { display: flex; gap: 2px; height: 288px; margin: 4px 2px 0 4px; border-top: 1px solid #111; }
.hleft { width: 103px; border: 1px solid #000; background: var(--cyan); }
.hleft fieldset { border: 1px solid #000; padding: 0 5px; height: 137px; }
.hleft label { display: flex; align-items: center; gap: 6px; height: 27px; font-weight: bold; }
.hleft input { appearance: none; width: 10px; height: 10px; margin-left: 2px; transform: rotate(45deg); border: 2px solid; border-color: var(--cyan-hi) var(--cyan-lo) var(--cyan-lo) var(--cyan-hi); }
.hleft input:checked { background: #c01050; border-color: var(--cyan-lo) var(--cyan-hi) var(--cyan-hi) var(--cyan-lo); }
.hlist { display: flex; justify-content: space-between; height: 115px; margin: 1px; }
.hlist ul { width: 82px; padding: 2px 3px; }
.hist li { line-height: 16px; margin-bottom: 2px; font-weight: bold; }
.hist .sel { font-weight: normal; }
.tags { display: flex; gap: 4px; }
.hleft .tags { padding: 0 1px; }
.tag { height: 30px; min-width: 30px; padding: 1px; display: flex; flex-direction: column; align-items: center; font: bold 10px/11px var(--serif); outline: 1px solid #000; outline-offset: -5px; }
.tag i { width: 7px; height: 7px; border: 1px solid #222; border-radius: 50%; margin: 2px; }
.tag .r { background: #f01010; } .tag .g { background: #20e020; }
.tag svg { width: 10px; height: 11px; }
.hright { flex: 1; min-width: 0; border: 2px solid #111; border-width: 1px 1px 2px; background: var(--cyan); display: flex; flex-direction: column; }
.plot { flex: 1; display: flex; flex-direction: column; }
.plot h3 { align-self: center; height: 22px; margin: 3px 0 -25px; padding: 2px 3px; font: italic bold 15px/20px var(--mono); background: #b4ffff; border: 1px solid #000; box-shadow: 2px 2px #777; }
.bars { flex: none; height: 168px; display: flex; align-items: flex-end; padding-left: 5px; border-bottom: 4px solid #000; }
.bar { width: 55px; text-align: center; }
.bar + .bar { width: 57px; }
.bar span { font-weight: bold; line-height: 15px; display: block; }
.bar i { display: block; border: 1px solid #111; border-bottom: 0; }
.low span { color: #e01010; }
.low i, .bins .low { background: #ffff20; }
.high i, .bins .high { background: #18e818; }
.bar.high { margin-left: -1px; }
.bins { display: flex; padding: 2px 0 0 5px; height: 35px; }
.bins span { width: 56px; height: 29px; border: 1px solid #111; text-align: center; font: bold 15px/14px var(--mono); margin-right: -1px; color: #111; }
.res { display: flex; height: 63px; flex: none; border: 1px solid #000; border-bottom: 0; }
.res ul { width: 78px; padding: 2px 3px; border-width: 1px; margin-right: 2px; font-weight: bold; }
.resbox { flex: 1; display: flex; flex-direction: column; border: 1px solid #000; padding: 0 2px; }
.resbox label { text-align: center; font-weight: bold; line-height: 20px; }
.resbox span { padding-left: 4px; font-weight: bold; line-height: 22px; }
.resbox input { appearance: none; width: 100%; height: 15px; border: 2px solid; border-color: var(--cyan-lo) var(--cyan-hi) var(--cyan-hi) var(--cyan-lo); background: #84b8b8; }
.resbox input::-webkit-slider-thumb { appearance: none; width: 30px; height: 11px; background: linear-gradient(90deg, transparent 13px, var(--cyan-lo) 13px 14px, var(--cyan-hi) 14px 15px, transparent 15px), var(--cyan); border: 1px solid; border-color: var(--cyan-hi) var(--cyan-lo) var(--cyan-lo) var(--cyan-hi); }
.sash { height: 10px; flex: none; display: flex; align-items: center; justify-content: flex-end; padding-right: 6px; background: linear-gradient(transparent 4px, var(--green-hi) 4px 5px, var(--green-lo) 5px 6px, transparent 6px); }
.sash i { width: 10px; height: 9px; background: var(--green); border: 2px solid; border-color: var(--green-hi) var(--green-lo) var(--green-lo) var(--green-hi); }
.map { flex: 1; margin: 0 1px 0 4px; border: 2px solid; border-color: var(--green-lo) #134 #134; }
.map svg { width: 96px; height: 130px; margin: 13px 0 0 178px; }

/* Results viewer */
.view-win { left: 102px; width: 495px; top: 406px; box-shadow: 0 0 5px #345; border: 1px solid #234; border-top: 0; }
.check { height: 30px; padding: 3px; border: solid #000; border-width: 1px 0 2px; font: bold 14px/18px var(--serif); text-align: center; }
.check span { display: block; background: var(--green); border: 2px solid; border-color: var(--green-hi) var(--green-lo) var(--green-lo) var(--green-hi); }
.cols { display: flex; height: 495px; background: var(--green); border-bottom: 2px solid #000; }
.vleft { width: 170px; display: flex; flex-direction: column; border-right: 2px solid #000; }
.heads { display: flex; height: 31px; padding: 1px 2px; border-bottom: 1px solid #000; align-items: center; gap: 2px; font-style: italic; }
.heads button { width: 46px; height: 27px; flex: none; }
.heads button:last-child { width: 38px; }
.heads b { flex: 1; align-self: stretch; line-height: 28px; border: solid #000; border-width: 0 2px; background: var(--cyan); text-align: center; }
.listrow { display: flex; justify-content: space-between; flex: 1; min-height: 0; }
.listrow ul { padding: 2px 3px; flex: 1; margin-right: 5px; white-space: nowrap; }
.listrow li { line-height: 16px; margin-bottom: 2px; }
.vleft .sbh, .vright .sbh { margin: 5px 19px 0 0; }
.opt { height: 32px; margin-top: 1px; padding: 1px 1px 1px 4px; border: 1px solid #000; border-bottom: 0; }
.knob { display: flex; align-items: center; padding-right: 6px; }
.knob::after { content: ""; flex: none; width: 12px; height: 6px; border: 2px solid; border-color: var(--cyan-hi) var(--cyan-lo) var(--cyan-lo) var(--cyan-hi); }
.opt .knob { height: 29px; padding-left: 4px; }
.vright { flex: 1; display: flex; flex-direction: column; padding: 0 1px 0 1px; }
.cats { display: flex; height: 33px; padding: 1px 0; background: var(--cyan); align-items: center; }
.cats button { width: 207px; height: 29px; font: italic bold 15px/18px var(--mono); }
.cats label { flex: 1; padding-left: 1px; font-weight: bold; }
.cats .knob { width: 61px; height: 28px; padding: 0 4px 0 3px; font-weight: bold; }
.vright .sbh { margin-top: 5px; }
.step { display: flex; height: 24px; margin-top: 2px; gap: 4px; align-items: stretch; }
.step button { width: 44px; flex: none; }
.step button:first-child { width: 53px; }
.step label { flex: 1; line-height: 24px; }
.step input { width: 58px; padding: 0 0 4px 4px; flex: none; }
.zoomrow { display: flex; height: 33px; margin-top: 2px; }
.boxed { display: flex; border: 1px solid #000; align-items: center; padding: 1px; }
.auto { width: 122px; padding-left: 5px; }
.auto .knob { width: 100%; height: 29px; padding: 0 4px; }
.sv { width: 98px; padding: 0; background: var(--cyan); margin-left: 1px; }
.sv label { width: 27px; }
.lime { flex: 1; align-self: stretch; background: #18e818; padding: 2px 1px 2px 6px; }
.lime .knob { background: #18e818; height: 100%; border-color: #a0f8a0 #2a8030 #2a8030 #a0f8a0; }
.lime .knob::after { border-color: #a0f8a0 #2a8030 #2a8030 #a0f8a0; }
.show { display: flex; align-items: center; gap: 4px; margin: -6px 0 0 4px; white-space: nowrap; }
.vright .tags { justify-content: flex-end; height: 33px; padding-top: 2px; }
.vright .tags .tag:last-child { width: 34px; }
.meas { height: 22px; border-bottom: 2px solid #000; background: var(--green); text-align: center; line-height: 20px; }
.erfline { height: 20px; background: var(--cream); border-bottom: 1px solid #000; padding-left: 2px; line-height: 18px; }
.acts { display: flex; gap: 6px; padding: 2px 2px 3px 1px; height: 34px; }
.acts button { width: 28px; display: flex; justify-content: center; align-items: center; flex: none; }
.acts svg { width: 22px; height: 23px; font: bold 10px var(--serif); }
.acts .close { flex: 1; }
.acts .hot { border-color: #d01818; }

/* Excel */
.xl { left: 670px; right: 0; top: 670px; bottom: 0; background: #cfe0f4; box-shadow: 0 0 14px #0006; font: 15px/20px var(--ui); color: #15428b; overflow: hidden; }
.a { width: 6px; height: 4px; }
.xtitle { display: flex; align-items: center; height: 34px; flex: none; background: #fff; color: #222; padding-left: 56px; }
.xtitle h2 { flex: 1; padding-left: 94px; text-align: center; font: 16px/34px var(--ui); color: #222; }
.qat { display: flex; align-items: center; gap: 10px; width: 115px; height: 27px; padding-left: 10px; border: 1px solid #aab0b8; border-left: 0; border-radius: 0 14px 14px 0; background: #f8f9fb; flex: none; }
.qat svg:not(.a) { width: 16px; height: 16px; }
.qat .a { margin-left: -4px; width: 7px; }
.more { width: 8px; height: 9px; margin-left: 8px; }
.orb { position: absolute; left: 5px; top: 9px; width: 46px; height: 46px; border-radius: 50%; border: 2px solid #a8b8d0; background: radial-gradient(circle at 50% 80%, #fff, #dce6f2 60%, #b8c8e0); display: grid; place-items: center; }
.orb svg { width: 29px; height: 29px; }
.tabs { display: flex; gap: 10px; height: 29px; padding: 2px 0 0 61px; background: #bfdbff; flex: none; border-bottom: 1px solid #8db2e3; }
.tabs button { line-height: 24px; border: 1px solid transparent; padding: 0 9px; }
.tabs .on { background: linear-gradient(#fff, #e4eefa); border-color: #8db2e3; border-bottom: 0; border-radius: 4px 4px 0 0; margin-bottom: -1px; }
.ribbon { display: flex; gap: 4px; height: 123px; flex: none; padding: 3px 0 4px 4px; background: linear-gradient(#dce8f6, #c6dbf2); border-bottom: 2px solid #8fb6e0; }
.grp { flex: none; display: flex; flex-direction: column; height: 115px; border: 1px solid #9ebbe0; border-radius: 4px; background: linear-gradient(#dbe6f4, #d2e0f1 14px, #c8d8ec 15px, #d8e6f5 91px); overflow: hidden; }
.grp .body { flex: 1; display: flex; min-height: 0; }
.grp footer { position: relative; height: 22px; line-height: 22px; background: #c1d9f1; color: #3e6aaa; text-align: center; }
.grp footer.la { padding-right: 21px; }
.grp footer .l { position: absolute; right: 6px; top: 5px; width: 10px; height: 10px; }
.clip { width: 132px; } .font { width: 271px; } .align { width: 270px; } .num { width: 157px; } .styles { width: 198px; } .cells { width: 157px; } .edit { width: 210px; }
.big { display: flex; flex-direction: column; align-items: center; padding-top: 8px; line-height: 20px; width: 58px; flex: none; white-space: nowrap; }
.big > svg:first-child { width: 30px; height: 30px; margin-bottom: 9px; font: bold 15px var(--serif); }
.big > .a { margin-top: 8px; }
.big span { display: flex; align-items: center; gap: 4px; margin-right: -8px; }
.clip .big { width: 55px; }
.clip .col { padding-left: 1px; }
.col { display: flex; flex-direction: column; padding-top: 1px; }
.col button { display: flex; align-items: center; gap: 7px; height: 26px; white-space: nowrap; }
.col svg:not(.a), .sum { width: 15px; height: 16px; }
.sum { color: #111; line-height: 16px; }
.grp .rows { flex-direction: column; gap: 13px; padding: 12px 3px 0; display: flex; }
.r { display: flex; gap: 4px; height: 28px; align-items: flex-start; }
.r .bs { height: 27px; }
.cb { display: flex; align-items: center; height: 29px; padding: 0 4px 0 2px; margin-right: -3px; border: 1px solid #a9c1e0; background: #e9f2fc; color: #111; }
.w150 { width: 150px; } .w56 { width: 57px; } .w149 { width: 149px; }
.bs.first { margin-left: 3px; }
.bs { display: flex; border: 1px solid #92b0d8; border-radius: 2px; background: linear-gradient(#dfe9f6, #c9dbf0); font: bold 14px/16px var(--serif); color: #222; }
.bs button { width: 26px; display: flex; align-items: center; justify-content: center; }
.bs button + button { border-left: 1px solid #b4cae6; }
.bs .wd { width: 38px; gap: 7px; }
.bs svg:not(.a, .m) { width: 16px; height: 16px; }
.bs svg.m { width: 6px; height: 4px; align-self: flex-start; margin-top: 6px; }
.bs svg.t { width: 20px; height: 18px; }
.bs .it { font-style: italic; }
.bs .s18 { font-size: 16px; } .bs .s14 { font-size: 12px; }
.bs .hl { background: linear-gradient(#fbc98c, #fba948 40%, #ffe9a0); }
.ab { font: bold 11px var(--serif); }
.wen { display: flex; flex-direction: column; align-items: center; font: bold 13px/12px "Noto Sans CJK SC", sans-serif; color: #3560c0; }
.wen small { font: bold 9px/10px var(--ui); color: #222; }
.pc { font: bold 14px/16px var(--ui); }
.dec button { flex-direction: column; font: bold 9px/9px var(--ui); }
.font .wd { width: 39px; gap: 6px; } .font .r + .r .bs:nth-child(2) .wd { width: 38px; }
.split { gap: 5px; }
.split .rows { padding-right: 0; }
.wrap { border-left: 2px solid #9fbce0; margin: 4px 0; padding: 12px 0 0 6px; display: flex; flex-direction: column; gap: 19px; }
.wrap button { display: flex; align-items: center; gap: 5px; white-space: nowrap; }
.wrap svg:not(.a) { width: 16px; height: 16px; }
.styles .body { gap: 6px; padding-left: 6px; }
.styles .big:nth-child(2) { width: 68px; }
.styles .big:nth-child(3) { width: 46px; margin-left: 2px; }
.cells .big { width: 50px; }
.cells .body { padding-left: 2px; }
.edit .body { padding-left: 9px; }
.edit .big { width: 48px; }
.edit .col { width: 98px; }
.edit .col button { gap: 5px; }
.edit .col .a { margin-left: 3px; }
.fbar { display: flex; height: 25px; flex: none; margin: 0 0 0 1px; padding-top: 1px; border-bottom: 4px solid #dce9f8; color: #222; background: #fff; }
.name { display: flex; align-items: center; width: 157px; padding-right: 4px; border-bottom: 1px solid #6f9ac8; }
.name input { width: 100%; padding-right: 8px; text-align: center; font: 14px/18px var(--mono); flex: 1; }
.name .a { filter: brightness(0); }
.fx { display: flex; justify-content: space-between; width: 76px; margin-left: 2px; padding: 0 6px; align-items: center; border: 1px solid #8fb0d8; border-radius: 10px 0 0 10px; background: linear-gradient(#e6f0fb, #b0cbec); }
.fx i { width: 8px; height: 8px; border-radius: 50%; background: #b8bfca; }
.fx em { font: italic bold 16px/18px var(--serif); color: #444; } .fx small { font-size: 11px; }
.formula { flex: 1; border-bottom: 1px solid #6f9ac8; }
table { width: calc(100% + 8px); table-layout: fixed; border-collapse: separate; border-spacing: 0; background: #fff; color: #111; font: 16px/18px "Noto Sans CJK SC", sans-serif; margin-left: 1px; border-top: 1px solid #6f9ac8; }
.c0 { width: 34px; } .c1 { width: 149px; }
th { padding: 0; font: 14px/17px var(--mono); color: #223; background: #e4ecf7; border: 0 solid #9eb6ce; border-width: 0 1px 1px 0; vertical-align: bottom; height: 19px; }
thead th { background: linear-gradient(#f6f9fd, #d3dcea); height: 18px; }
thead th:first-child { background: #a9c4e9; }
thead svg { width: 10px; height: 12px; margin: 0 4px 2px auto; }
td { height: 19px; padding: 0 0 0 2px; line-height: 18px; border-bottom: 1px solid #000; white-space: nowrap; overflow: hidden; font-weight: 300; }
td:nth-child(2) { border-right: 2px solid #000; }
td span { font: 13px/1px var(--mono); }
.key td { height: 25px; padding-left: 4px; font-size: 19px; line-height: 24px; font-weight: bold; color: #e81010; }
.key span { font: bold 18px/1px var(--mono); }
```
